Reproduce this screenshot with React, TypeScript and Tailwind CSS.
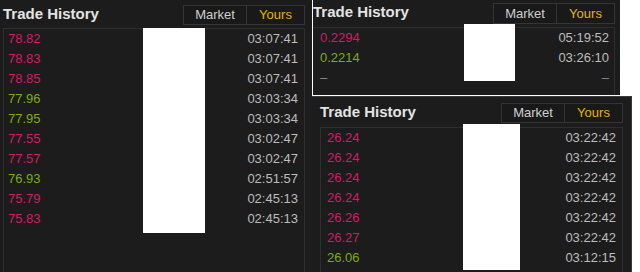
import React from "react";

type Row = { p: string; t: string; up: boolean | null };

const leftRows: Row[] = [
  { p: "78.82", t: "03:07:41", up: false },
  { p: "78.83", t: "03:07:41", up: false },
  { p: "78.85", t: "03:07:41", up: false },
  { p: "77.96", t: "03:03:34", up: true },
  { p: "77.95", t: "03:03:34", up: true },
  { p: "77.55", t: "03:02:47", up: false },
  { p: "77.57", t: "03:02:47", up: false },
  { p: "76.93", t: "02:51:57", up: true },
  { p: "75.79", t: "02:45:13", up: false },
  { p: "75.83", t: "02:45:13", up: false },
];

const topRows: Row[] = [
  { p: "0.2294", t: "05:19:52", up: false },
  { p: "0.2214", t: "03:26:10", up: true },
  { p: "–", t: "–", up: null },
];

const bottomRows: Row[] = [
  { p: "26.24", t: "03:22:42", up: false },
  { p: "26.24", t: "03:22:42", up: false },
  { p: "26.24", t: "03:22:42", up: false },
  { p: "26.24", t: "03:22:42", up: false },
  { p: "26.26", t: "03:22:42", up: false },
  { p: "26.27", t: "03:22:42", up: false },
  { p: "26.06", t: "03:12:15", up: true },
];

function Title() {
  return (
    <div className="text-[15px] leading-[18px] font-bold text-[#e4e4e4] whitespace-nowrap">
      Trade History
    </div>
  );
}

function Tabs({ h }: { h: string }) {
  return (
    <div className={`flex w-[122px] ${h} border border-[#353535] bg-[#191919] text-[13px]`}>
      <div className="w-[63px] border-r border-[#353535] flex items-center justify-center text-[#cfcfcf]">
        Market
      </div>
      <div className="flex-1 flex items-center justify-center text-[#e8b10c]">Yours</div>
    </div>
  );
}

function Rows({ rows, pl, pr }: { rows: Row[]; pl: string; pr: string }) {
  return (
    <>
      {rows.map((r, i) => (
        <div
          key={i}
          className={`flex justify-between h-[20px] leading-[20px] text-[13px] ${pl} ${pr}`}
        >
          <span
            className={
              r.up === null
                ? "text-[#8a8a8a]"
                : r.up
                ? "text-[#7aad10]"
                : "text-[#d01b68]"
            }
          >
            {r.p}
          </span>
          <span className={r.up === null ? "text-[#8a8a8a]" : "text-[#bcbcbc]"}>{r.t}</span>
        </div>
      ))}
    </>
  );
}

export default function App() {
  return (
    <div
      className="w-[640px] h-[272px] bg-white flex overflow-hidden"
      style={{ fontFamily: '"Liberation Sans", Arial, sans-serif' }}
    >
      {/* Left panel */}
      <div className="w-[312px] h-[272px] bg-[#1c1c1c] pl-[3px] pt-[5px] flex flex-col">
        <div className="flex w-[302px] justify-between items-start">
          <Title />
          <Tabs h="h-[20px]" />
        </div>
        <div className="relative mt-[3px] w-[302px] flex-1 border border-b-0 border-[#2e2e2e]">
          <Rows rows={leftRows} pl="pl-[4px]" pr="pr-[6px]" />
          <div className="absolute left-[139px] top-[-1px] w-[62px] h-[205px] bg-white" />
        </div>
      </div>

      {/* Right column */}
      <div className="w-[328px] flex flex-col">
        <div className="flex h-[96px]">
          <div className="w-[308px] h-[96px] bg-[#1c1c1c] border-l border-b border-white pt-[3px] flex flex-col">
            <div className="flex w-[302px] justify-between items-start">
              <Title />
              <Tabs h="h-[21px]" />
            </div>
            <div className="relative mt-[3px] w-[302px] flex-1 border-t border-r border-[#2e2e2e]">
              <Rows rows={topRows} pl="pl-[7px]" pr="pr-[5px]" />
              <div className="absolute left-[151px] top-[-4px] w-[51px] h-[57px] bg-white" />
            </div>
          </div>
          <div className="flex-1 bg-white" />
        </div>
        <div className="flex h-[176px]">
          <div className="w-[320px] h-[176px] bg-[#1c1c1c] border-t border-r border-[#3a3a3a] pl-[8px] pt-[6px] flex flex-col">
            <div className="flex w-[303px] justify-between items-start">
              <Title />
              <Tabs h="h-[20px]" />
            </div>
            <div className="relative mt-[4px] w-[303px] flex-1 border border-b-0 border-[#2e2e2e]">
              <Rows rows={bottomRows} pl="pl-[6px]" pr="pr-[6px]" />
              <div className="absolute left-[142px] top-[-4px] w-[57px] h-[146px] bg-white" />
            </div>
          </div>
          <div className="flex-1 bg-white" />
        </div>
      </div>
    </div>
  );
}
